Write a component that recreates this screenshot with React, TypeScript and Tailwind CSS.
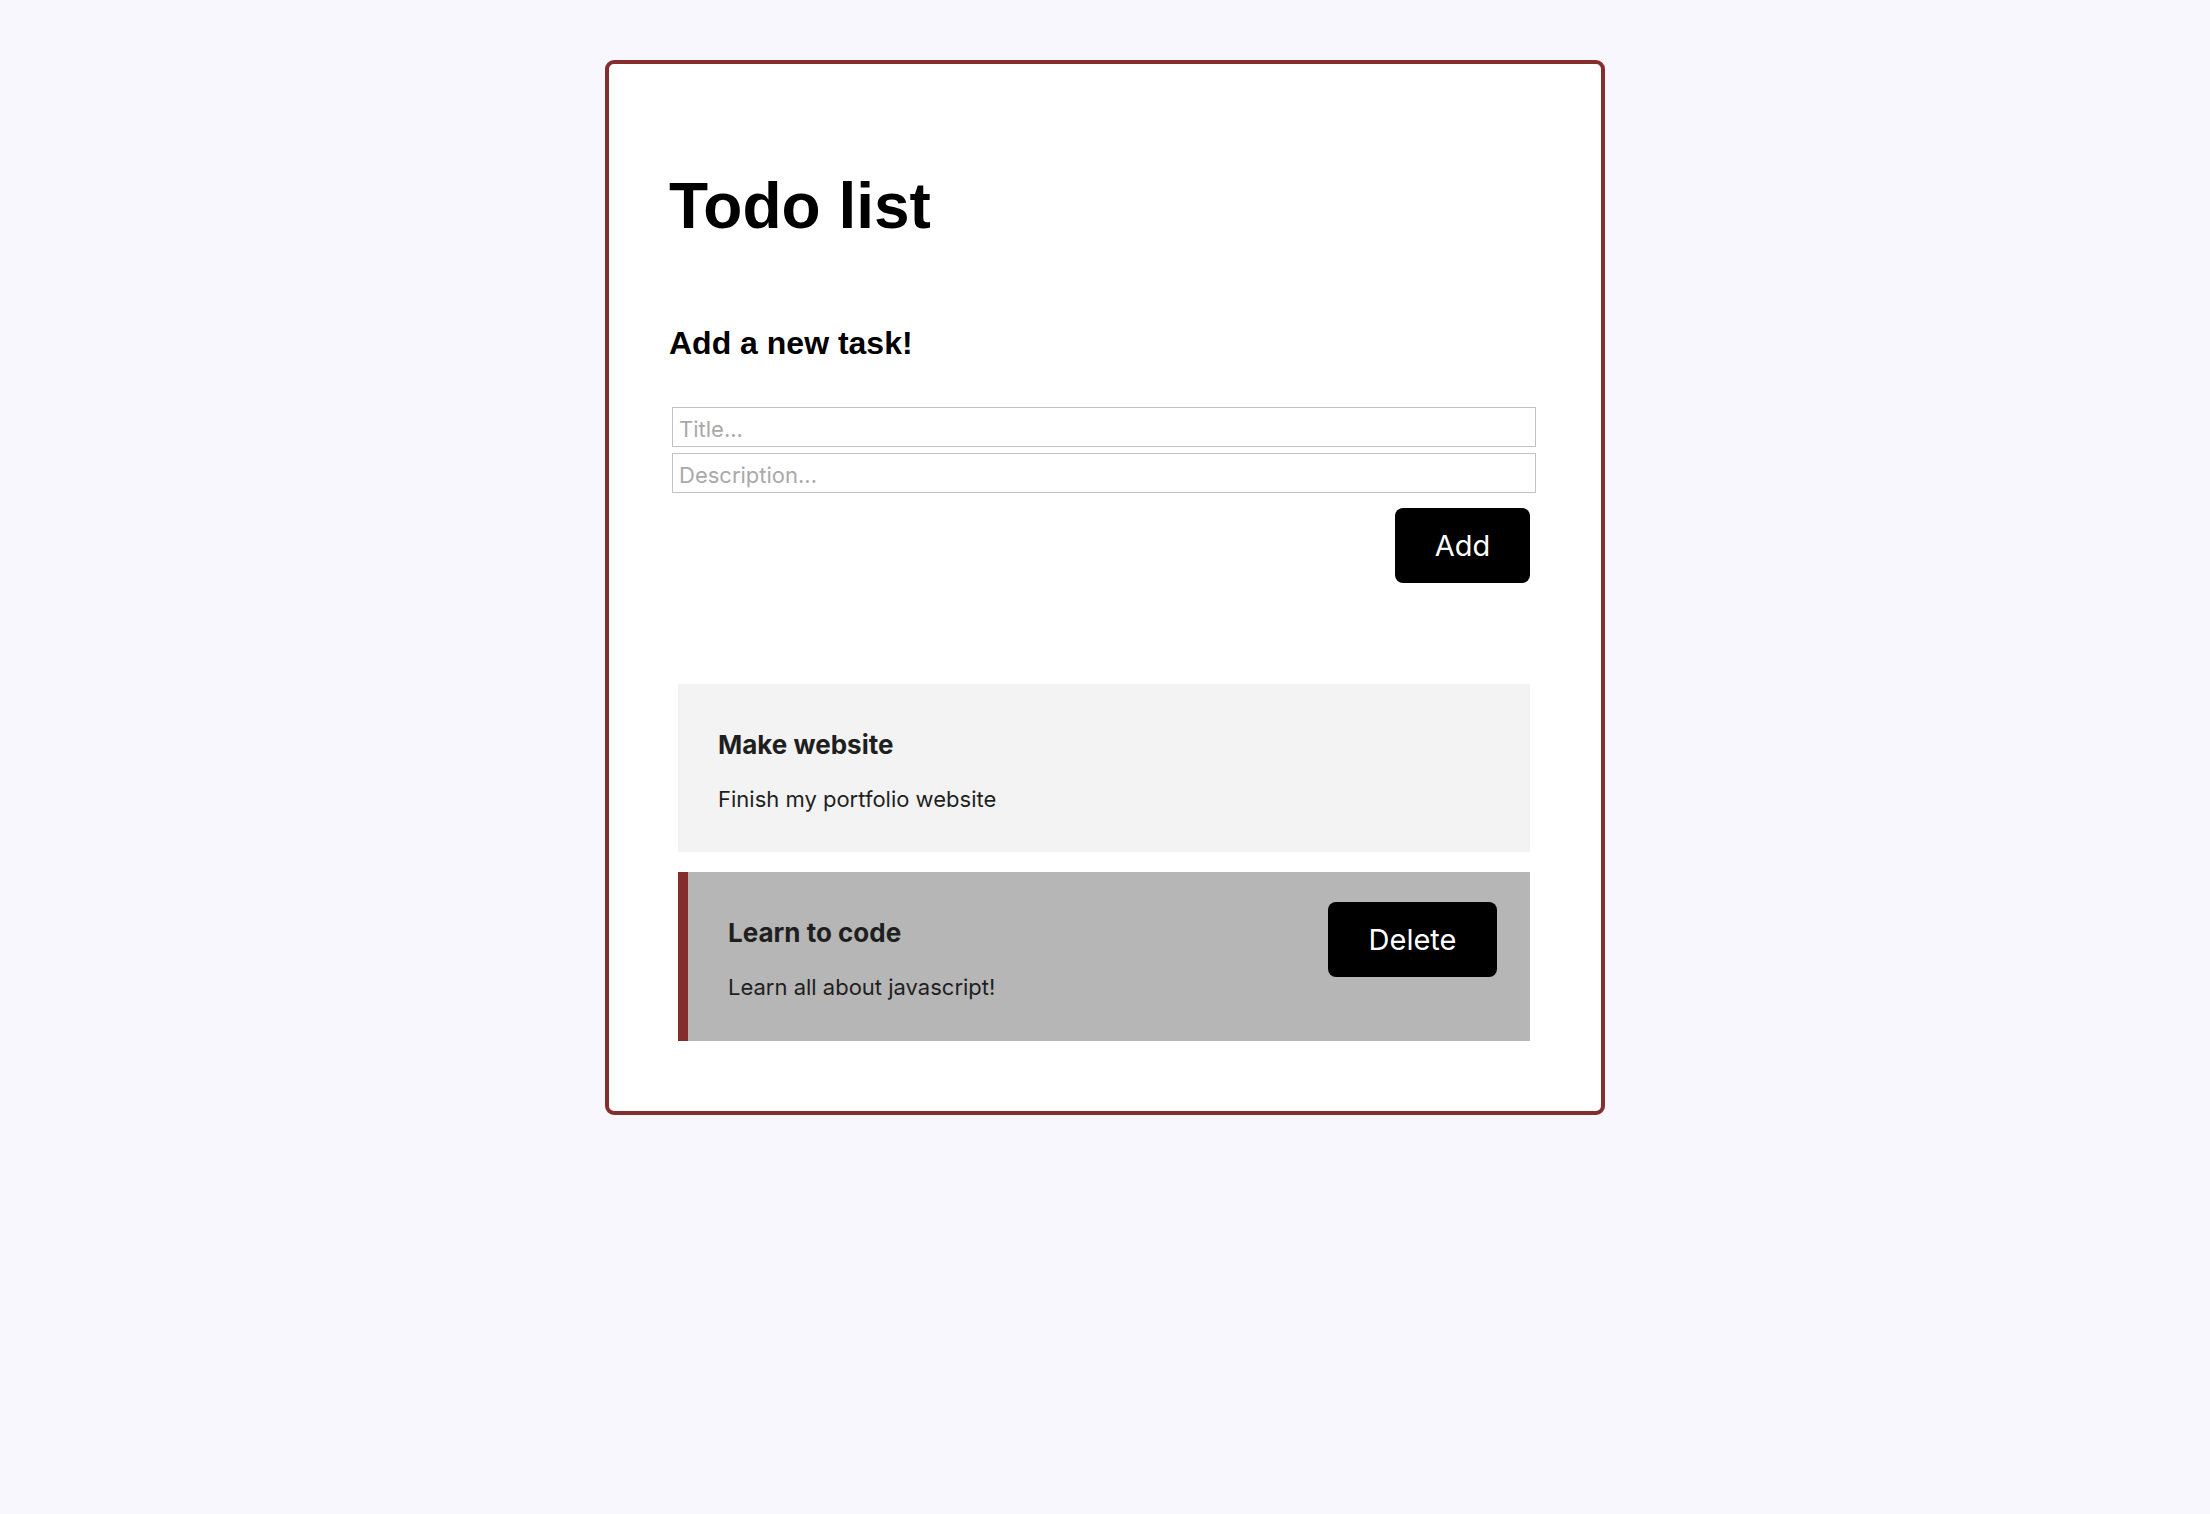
import React from "react";

const sans = { fontFamily: "Inter, 'Noto Sans', sans-serif" };

export default function App() {
  return (
    <div className="min-h-screen w-full bg-[#f8f7fd] pt-[60px] pb-[100px]">
      <div className="mx-auto w-[1000px] rounded-[9px] border-4 border-[#862d2d] bg-white px-[60px] pt-[110px] pb-[70px]">
        <h1 className="text-[64px] leading-none font-bold text-black font-['Liberation_Sans',Arial,sans-serif]">
          Todo list
        </h1>
        <h2 className="mt-[89px] text-[32px] leading-none font-bold text-black font-['Liberation_Sans',Arial,sans-serif]">
          Add a new task!
        </h2>
        <div className="mt-[48px] ml-[3px] flex w-[864px] flex-col gap-[6px]" style={sans}>
          <input
            placeholder="Title..."
            className="h-[40px] w-full border border-[#c3c3c3] px-[6px] pt-[4px] text-[22px] leading-none text-black outline-none placeholder:text-[#a9a9a9]"
          />
          <input
            placeholder="Description..."
            className="h-[40px] w-full border border-[#c3c3c3] px-[6px] pt-[4px] text-[22px] leading-none text-black outline-none placeholder:text-[#a9a9a9]"
          />
        </div>
        <div className="mt-[15px] flex justify-end pr-[11px]" style={sans}>
          <button className="flex h-[75px] w-[135px] items-center justify-center rounded-[8px] bg-black text-[29px] leading-none text-white">
            Add
          </button>
        </div>
        <div className="mt-[101px] ml-[9px] flex w-[852px] flex-col gap-[20px]" style={sans}>
          <div className="bg-[#f3f3f3] pl-[40px] pt-[48px] pb-[42px]">
            <h3 className="text-[26px] leading-none font-bold text-[#1f1f1f]">Make website</h3>
            <p className="mt-[30px] text-[22px] leading-none text-[#1f1f1f]">Finish my portfolio website</p>
          </div>
          <div className="flex items-start justify-between border-l-[10px] border-[#852d2d] bg-[#b6b6b6]">
            <div className="pl-[40px] pt-[48px] pb-[43px]">
              <h3 className="text-[26px] leading-none font-bold text-[#1f1f1f]">Learn to code</h3>
              <p className="mt-[30px] text-[22px] leading-none text-[#1f1f1f]">Learn all about javascript!</p>
            </div>
            <button className="mt-[30px] mr-[33px] flex h-[75px] w-[169px] items-center justify-center rounded-[8px] bg-black text-[29px] leading-none text-white">
              Delete
            </button>
          </div>
        </div>
      </div>
    </div>
  );
}
